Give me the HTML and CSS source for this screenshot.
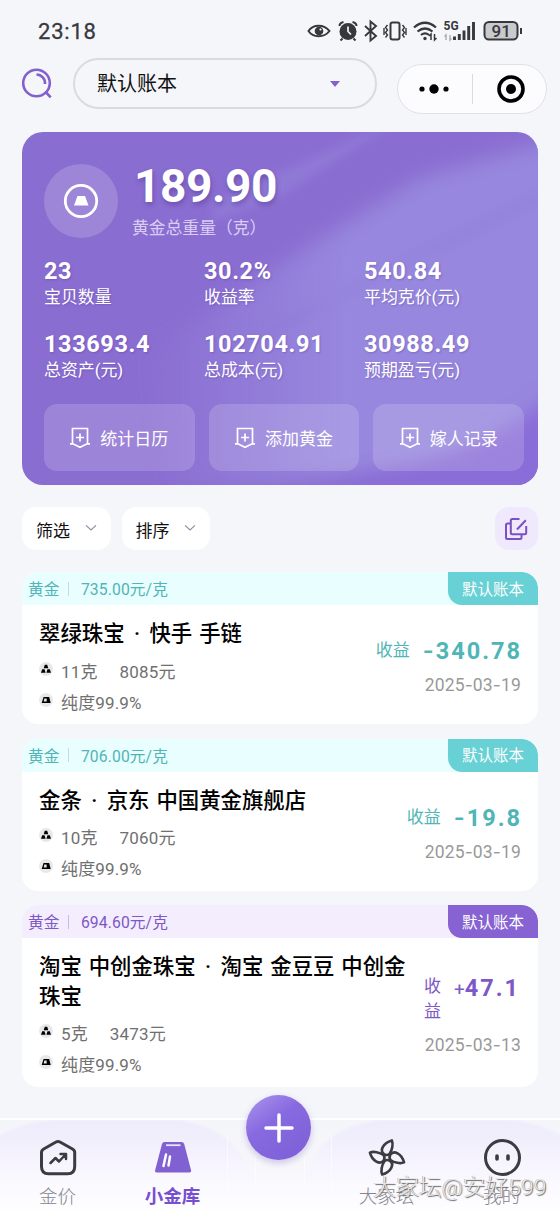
FILE: index.html
```html
<!DOCTYPE html>
<html lang="zh-CN">
<head>
<meta charset="utf-8">
<title>小金库</title>
<link rel="stylesheet" href="styles.css">
</head>
<body>
<svg class="defs" width="0" height="0" aria-hidden="true">
  <defs>
    <symbol id="shield" viewBox="0 0 22 22"><path d="M3.500 16.500V1.500h15v15M1 16.800h2.800L11 20.200l7.200-3.400H21M11 6.500v8M7 10.500h8" fill="none" stroke="currentColor" stroke-width="1.700"/></symbol>
    <symbol id="bars" viewBox="0 0 14 14"><circle cx="7" cy="7" r="7" fill="#e8e8ea"/><path d="M5.800 2.700h2.400l1.100 3.500H4.700zM3.200 7.200h2.300l1.100 3.500H2zM8.500 7.200h2.300l1.200 3.500H7.400z" fill="#000"/></symbol>
    <symbol id="ingot" viewBox="0 0 14 14"><circle cx="7" cy="7" r="7" fill="#e8e8ea"/><path d="M4.600 4h5.600l1.500 6H2.700z" fill="#000"/><path d="M5.300 5.500h2.400v3H4.700z" fill="#e4e4e6"/></symbol>
    <symbol id="chev" viewBox="0 0 12 8"><path d="M1 1.300l5 4.700 5-4.700" fill="none" stroke="#8d8aa5" stroke-width="1.100"/></symbol>
  </defs>
</svg>
<div class="screen">
  <header class="status">
    <span class="clock">23:18</span>
    <svg class="status-icons" width="218" height="24" viewBox="0 0 218 24" fill="none" stroke="#38383c" stroke-width="2">
      <path d="M1.500 12C6 5 17 5 22.500 12 17 19 6 19 1.500 12z"/><circle cx="12" cy="12" r="4.300" fill="#38383c" stroke="none"/><circle cx="13.500" cy="10.500" r="1.100" fill="#f5f6fa" stroke="none"/>
      <circle cx="41" cy="12.500" r="8.500" fill="#38383c" stroke="none"/><path d="M32.500 7q0-3 4-4M49.500 7q0-3-4-4M35.500 19.500l-2 2M46.500 19.500l2 2"/><path d="M41 7.500v5l3 3" stroke="#f5f6fa" stroke-width="1.700"/>
      <path d="M58 7l11 10-5.500 4.500v-19L69 7 58 17" stroke-width="1.900"/>
      <rect x="83.500" y="3.500" width="9" height="17" rx="2"/><path d="M80.500 6l-2 2.500 2 2.500-2 2.500 2 2.500-2 2.500M95.500 6l2 2.500-2 2.500 2 2.500-2 2.500 2 2.500M77 9v7M99 9v7" stroke-width="1.400"/>
      <path d="M107 8.500q11-9.500 22 0M110.500 12.500q7.500-6 15 0M114 16q4-3.300 8 0" stroke-width="2.200"/><circle cx="118" cy="19.500" r="1.700" fill="#38383c" stroke="none"/><path d="M124 21v-6l-2 2M127.500 15v6l2-2" stroke-width="1.500"/>
      <path d="M139 21v-5l-1.500 1.500M143 16v5l1.500-1.500" stroke="#aaa" stroke-width="1.400"/>
      <path d="M147.500 17.500V21M152.300 15v6M157 11.500V21M161.700 7v14M166.500 3v18" stroke-width="2.900"/>
      <rect x="177.500" y="3" width="33" height="17.500" rx="4.500" fill="#c9cacd"/><path d="M214 9v6" stroke-width="2"/>
      <text x="136.500" y="11" class="net">5G</text><text x="184.500" y="18.200" class="bat">91</text>
    </svg>
  </header>

  <div class="topbar">
    <svg class="search" width="32" height="32" viewBox="0 0 32 32" fill="none" stroke="#8460ce" stroke-width="2.600"><circle cx="15.500" cy="15" r="13.300"/><path d="M15.500 6.500a8.700 8.700 0 0 1 8.500 9.500M24.700 24l5 5.300"/></svg>
    <div class="book"><span>默认账本</span><i class="caret"></i></div>
    <div class="capsule">
      <svg width="30" height="12" viewBox="0 0 30 12"><circle cx="3" cy="6" r="2.600"/><circle cx="15" cy="6" r="4.700"/><circle cx="27" cy="6" r="2.600"/></svg>
      <i class="split"></i>
      <svg width="28" height="28" viewBox="0 0 28 28"><circle cx="14" cy="14" r="12" fill="none" stroke="#000" stroke-width="3.600"/><circle cx="14" cy="14" r="5"/></svg>
    </div>
  </div>

  <section class="summary">
    <svg class="sheen" viewBox="0 0 516 353" preserveAspectRatio="none">
      <defs><filter id="soft" x="-20%" y="-20%" width="140%" height="140%"><feGaussianBlur stdDeviation="10"/></filter><filter id="soft2" x="-20%" y="-50%" width="140%" height="200%"><feGaussianBlur stdDeviation="5"/></filter>
      <linearGradient id="fadein" gradientUnits="userSpaceOnUse" x1="120" y1="0" x2="320" y2="0"><stop offset="0" stop-color="#9787de" stop-opacity="0"/><stop offset="1" stop-color="#9787de"/></linearGradient></defs>
      <path d="M120 225L270 125 400 45 560 0V290L400 335 230 355H150z" fill="url(#fadein)" filter="url(#soft)"/>
      <path d="M190 70L380-15 260 65 190 90z" fill="#9787de" opacity=".45" filter="url(#soft2)"/>
      <path d="M520 63L410 118 340 153 240 203" stroke="#8a6dd1" stroke-width="4" opacity=".25" fill="none" filter="url(#soft2)"/>
      <path d="M540 260L440 325 300 358 350 380H540z" fill="#8a6dd8" filter="url(#soft)"/>
    </svg>
    <div class="total">
      <div class="badge"><svg width="36" height="36" viewBox="0 0 36 36"><circle cx="18" cy="18" r="15.700" fill="none" stroke="#fff" stroke-width="2.800"/><path d="M14.500 13h7.500l3.500 9.500H11z" fill="#fff"/></svg></div>
      <div class="total-text"><strong>189.90</strong><span>黄金总重量（克）</span></div>
    </div>
    <dl class="stats">
      <div><dt>23</dt><dd>宝贝数量</dd></div>
      <div><dt>30.2%</dt><dd>收益率</dd></div>
      <div><dt>540.84</dt><dd>平均克价(元)</dd></div>
      <div><dt>133693.4</dt><dd>总资产(元)</dd></div>
      <div><dt>102704.91</dt><dd>总成本(元)</dd></div>
      <div><dt>30988.49</dt><dd>预期盈亏(元)</dd></div>
    </dl>
    <div class="actions">
      <div class="action"><svg width="22" height="22"><use href="#shield"/></svg>统计日历</div>
      <div class="action"><svg width="22" height="22"><use href="#shield"/></svg>添加黄金</div>
      <div class="action"><svg width="22" height="22"><use href="#shield"/></svg>嫁人记录</div>
    </div>
  </section>

  <div class="filters">
    <div class="chip">筛选<svg width="12" height="8"><use href="#chev"/></svg></div>
    <div class="chip">排序<svg width="12" height="8"><use href="#chev"/></svg></div>
    <div class="edit"><svg width="24" height="24" viewBox="0 0 24 24" fill="none" stroke="#7a51c0" stroke-width="2" stroke-linejoin="round"><path d="M15.500 2H8.300Q6.800 2 6.800 3.500V15.700Q6.800 17.200 8.300 17.200H20.700Q22.200 17.200 22.200 15.700V9M6.800 6.500H3.500Q2 6.500 2 8V20.500Q2 22 3.500 22H16Q17.500 22 17.500 20.500V17.200M13 12.500L21.800 3.200"/></svg></div>
  </div>

  <main class="list">
    <article class="item teal">
      <div class="item-head"><span>黄金</span><i></i><span>735.00元/克</span><b>默认账本</b></div>
      <div class="item-body">
        <div class="info">
          <h2>翠绿珠宝 <em>·</em> 快手 手链</h2>
          <p><svg width="14" height="14"><use href="#bars"/></svg><span>11克</span><span>8085元</span></p>
          <p><svg width="14" height="14"><use href="#ingot"/></svg><span>纯度99.9%</span></p>
        </div>
        <div class="gain"><div class="profit"><span>收益</span><strong><u>-</u>340.78</strong></div><time>2025<u>-</u>03<u>-</u>19</time></div>
      </div>
    </article>
    <article class="item teal">
      <div class="item-head"><span>黄金</span><i></i><span>706.00元/克</span><b>默认账本</b></div>
      <div class="item-body">
        <div class="info">
          <h2>金条 <em>·</em> 京东 中国黄金旗舰店</h2>
          <p><svg width="14" height="14"><use href="#bars"/></svg><span>10克</span><span>7060元</span></p>
          <p><svg width="14" height="14"><use href="#ingot"/></svg><span>纯度99.9%</span></p>
        </div>
        <div class="gain"><div class="profit"><span>收益</span><strong><u>-</u>19.8</strong></div><time>2025<u>-</u>03<u>-</u>19</time></div>
      </div>
    </article>
    <article class="item violet">
      <div class="item-head"><span>黄金</span><i></i><span>694.60元/克</span><b>默认账本</b></div>
      <div class="item-body">
        <div class="info">
          <h2>淘宝 中创金珠宝 <em>·</em> 淘宝 金豆豆 中创金<br>珠宝</h2>
          <p><svg width="14" height="14"><use href="#bars"/></svg><span>5克</span><span>3473元</span></p>
          <p><svg width="14" height="14"><use href="#ingot"/></svg><span>纯度99.9%</span></p>
        </div>
        <div class="gain"><div class="profit"><span>收<br>益</span><strong><small>+</small>47.1</strong></div><time>2025<u>-</u>03<u>-</u>13</time></div>
      </div>
    </article>
  </main>

  <nav class="tabs">
    <svg class="tabs-bg" width="560" height="96" viewBox="0 0 560 96">
      <defs><linearGradient id="mound" x1="0" y1="0" x2="0" y2="1"><stop offset="0" stop-color="#eeeafc"/><stop offset=".65" stop-color="#faf9fe"/><stop offset="1" stop-color="#fff"/></linearGradient>
      <linearGradient id="base" x1="0" y1="0" x2="0" y2="1"><stop offset="0" stop-color="#f4f5f9"/><stop offset=".5" stop-color="#f7f7fb"/><stop offset="1" stop-color="#fff"/></linearGradient>
      <filter id="edge" x="-5%" y="-10%" width="110%" height="120%"><feGaussianBlur stdDeviation="1.500"/></filter></defs>
      <rect width="560" height="96" fill="url(#base)"/>
      <path d="M-10 24Q20 3 65 3H170Q228 5 253 55 260 66 278 66 297 66 305 55 325 5 390 3H500Q540 3 570 24V100H-10z" fill="url(#mound)" filter="url(#edge)"/>
      <path d="M0 2h560" stroke="#fff" stroke-width="2"/>
      <path d="M227.500 20v76M255.500 40v25M304.500 40v25M331.500 20v76" stroke="#fff" opacity=".65"/>
    </svg>
    <div class="tab"><svg width="38" height="38" viewBox="0 0 38 38" fill="none" stroke="#3c3b40" stroke-width="3" stroke-linejoin="round" stroke-linecap="round"><path d="M17 3.500q2-1.200 4 0L33.500 10.500q2.200 1.200 2.200 3.500V28q0 7.300-7 7.300H9.500q-7 0-7-7.300V14q0-2.300 2.200-3.500z"/><path d="M11.500 24.500l5-5 3.500 3.500 7-7.500M21.500 15.500H27v5" stroke-width="2.500"/></svg><span>金价</span></div>
    <div class="tab active"><svg width="38" height="38" viewBox="0 0 38 38"><path d="M10.500 3.500H27.500q2 0 2.700 2L37 31.500q.7 2.500-2 2.500H3Q.500 34 1.200 31.500L8 5.500q.500-2 2.500-2z" fill="#8160d2"/><path d="M12 6.700h14.500" stroke="#e9e2fb" stroke-width="1.800"/><path d="M12 16L9.500 27.500M16 18l-1.500 9" stroke="#fff" stroke-width="2.500" stroke-linecap="round"/></svg><span>小金库</span></div>
    <div class="mid"></div>
    <div class="tab"><svg width="40" height="40" viewBox="-20 -20 40 40" fill="none" stroke="#3c3b40" stroke-width="2.700" stroke-linejoin="round"><path id="blade" d="M-3-3.500C-8-7-4-15 5-17.500 6.500-14 5.500-7.500 2.500-3.500 1-2.500-1.500-2.500-3-3.500z"/><use href="#blade" transform="rotate(90)"/><use href="#blade" transform="rotate(180)"/><use href="#blade" transform="rotate(270)"/></svg><span>大家坛</span></div>
    <div class="tab"><svg width="40" height="38" viewBox="0 0 40 38" fill="none" stroke="#3c3b40" stroke-width="3"><circle cx="20.500" cy="19" r="17"/><path d="M15 17.500v3M26 17.500v3" stroke-width="3.600" stroke-linecap="round"/></svg><span>我的</span></div>
    <div class="fab"><svg width="32" height="32" viewBox="0 0 32 32"><path d="M16 3v26M3 16h26" stroke="#fff" stroke-width="3.500" stroke-linecap="round"/></svg></div>
    <div class="watermark">大家坛@安好599</div>
  </nav>
</div>
</body>
</html>
```
FILE: styles.css
```css
* { box-sizing: border-box; }
body { margin: 0; background: #f5f6fa; font-family: Roboto, "Noto Sans CJK SC", sans-serif; color: #111; }
h2, p, dl, dd { margin: 0; }
u { text-decoration: none; font-family: Inter, sans-serif; }
.defs { position: absolute; }
.screen { width: 560px; height: 1213px; display: flex; flex-direction: column; overflow: hidden; }

.status { height: 58px; padding: 19px 35px 0 38px; display: flex; justify-content: space-between; align-items: flex-start; flex: none; }
.clock { font-size: 22px; line-height: 26px; letter-spacing: .8px; font-weight: 400; color: #38383c; -webkit-text-stroke: .3px #38383c; }
.net { font: 700 12px Roboto, sans-serif; fill: #38383c; stroke: none; }
.bat { font: 500 17px Roboto, sans-serif; fill: #38383c; stroke: none; }

.topbar { height: 74px; display: flex; align-items: flex-start; padding-left: 21px; flex: none; }
.search { margin-top: 10px; }
.book { width: 304px; height: 51px; margin-left: 20px; border: 2px solid #dadae0; border-radius: 26px; padding: 0 35px 2px 22px; display: flex; align-items: center; justify-content: space-between; font-size: 20px; }
.caret { border: 5px solid transparent; border-top: 6px solid #8460ce; border-bottom: 0; margin-top: 2px; }
.capsule { width: 150px; height: 50px; margin: 6px 0 0 20px; border: 1px solid #e0e1e5; border-radius: 25px; background: #fcfcfe; display: flex; align-items: center; padding-left: 21px; }
.split { width: 1px; height: 30px; background: #dadbdf; margin: 0 24px 0 23px; }

.summary { position: relative; overflow: hidden; width: 516px; height: 353px; margin-left: 22px; border-radius: 21px; background: #8a6dd1; color: #fff; padding: 32px 14px 14px 22px; flex: none; }
.sheen { position: absolute; inset: 0; width: 100%; height: 100%; }
.total, .stats, .actions { position: relative; }
.total { display: flex; gap: 15px; height: 91px; }
.badge { width: 74px; height: 74px; border-radius: 50%; background: rgba(255,255,255,.17); display: flex; align-items: center; justify-content: center; }
.total-text { display: flex; flex-direction: column; }
.total-text strong { font-size: 46px; line-height: 44px; padding-left: 1px; letter-spacing: -.4px; text-shadow: 1px 3px 5px rgba(65,40,130,.4); }
.total-text span { font-size: 16.800px; line-height: 24px; margin: 8px 0 0 -1px; color: #d9cef2; }
.stats { display: grid; grid-template-columns: repeat(3, 160px); grid-auto-rows: 72.500px; height: 149px; text-shadow: 1px 1px 2px rgba(70,45,140,.3); }
.stats dt { font-size: 23.500px; line-height: 28px; letter-spacing: .6px; font-weight: 700; padding-top: 2px; }
.stats dd { font-size: 16.900px; line-height: 24px; }
.actions { display: flex; gap: 14px; }
.action { width: 151px; height: 67px; border-radius: 13px; background: rgba(255,255,255,.16); display: flex; align-items: center; justify-content: center; gap: 9px; font-size: 17px; padding-right: 1px; }

.filters { display: flex; margin: 22px 22px 0; gap: 11px; flex: none; }
.chip { width: 88.500px; height: 43px; border-radius: 14px; background: #fff; padding: 2px 14px 0 14px; font-size: 17px; display: flex; align-items: center; justify-content: space-between; }
.chip svg { margin-bottom: 3px; }
.edit { width: 43px; height: 43px; border-radius: 14px; background: #f0e8fc; margin-left: auto; padding-right: 1px; display: flex; align-items: center; justify-content: center; }

.list { margin: 22px 22px 0; display: flex; flex-direction: column; gap: 14.500px; flex: none; }
.item { border-radius: 16px; background: #fff; overflow: hidden; }
.item-head { height: 33px; padding-left: 6px; display: flex; align-items: center; font-size: 15.700px; }
.item-head i { width: 1px; height: 14px; margin: 0 12px 0 8.500px; background: currentColor; opacity: .35; }
.item-head i + span { letter-spacing: .12px; }
.item-head b { margin-left: auto; width: 90px; height: 33px; padding-bottom: 2px; border-radius: 0 16px 0 14px; font-weight: 400; font-size: 15.500px; color: #fff; display: flex; align-items: center; justify-content: center; }
.teal { color: #4fb5b6; }
.teal .item-head { background: #e9fefe; }
.teal b { background: #68d1d5; }
.violet { color: #7d58c6; }
.violet .item-head { background: #f3edfe; }
.violet b { background: #8662d2; }
.item-body { display: flex; justify-content: space-between; padding: 14px 17px 7px; }
.info h2 { font-size: 21.400px; line-height: 29.500px; font-weight: 500; color: #000; word-spacing: 1.600px; white-space: nowrap; margin-bottom: 6px; }
.info em { font-style: normal; padding: 0 2.500px; }
.info p { height: 31px; display: flex; align-items: center; font-size: 17px; color: #707070; font-weight: 400; }
.info p:last-child { margin-bottom: .5px; }
.info p span { margin-left: 8px; letter-spacing: .15px; }
.info p span + span { margin-left: 22px; }
.info svg { margin-bottom: 3px; }
.gain { display: flex; flex-direction: column; align-items: flex-end; justify-content: center; }
.profit { display: flex; align-items: flex-start; gap: 13px; }
.profit span { font-size: 17px; line-height: 25px; }
.profit strong { font-size: 23.500px; line-height: 26px; letter-spacing: 2px; margin-right: -1px; white-space: nowrap; }
.profit u { font-weight: 600; }
.profit small { font-size: 19px; font-weight: 400; letter-spacing: 0; }
.violet .profit { padding-top: 1px; }
.violet .profit strong { margin: 1px 1px 0 0; }
.gain time { font-size: 17.500px; line-height: 26px; margin-top: 8px; letter-spacing: .15px; color: #999; }

.tabs { position: relative; height: 96px; margin-top: auto; display: flex; flex: none; }
.tabs-bg { position: absolute; left: 0; top: 0; }
.tab { position: relative; width: 115px; height: 96px; display: flex; flex-direction: column; align-items: center; padding-top: 21px; font-size: 18.500px; color: #85858d; font-weight: 300; }
.tab svg { height: 39px; }
.tab span { line-height: 26px; margin-top: 7px; }
.active { color: #7750d2; font-weight: 700; }
.mid { width: 99px; }
.fab { position: absolute; left: 246px; top: -22px; width: 65px; height: 65px; border-radius: 50%; background: linear-gradient(145deg, #ab96ed, #886ae0 40%, #7d5fd5); box-shadow: 0 3px 7px rgba(110,80,190,.3); display: flex; align-items: center; justify-content: center; }
.watermark { position: absolute; left: 373px; top: 57px; font-size: 22.900px; line-height: 28px; color: rgba(255,255,255,.8); white-space: nowrap; font-weight: 300; text-shadow: 1px 1px 1px #666, -.5px -.5px 0 #aaa; }
```
